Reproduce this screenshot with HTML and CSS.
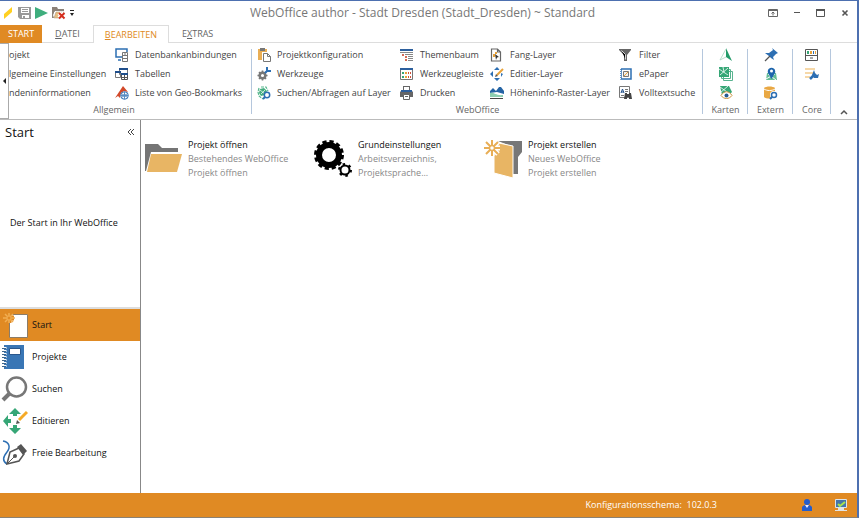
FILE: index.html
```html
<!DOCTYPE html>
<html lang="de">
<head>
  <meta charset="UTF-8">
  <meta name="viewport" content="width=device-width, initial-scale=1.0">
  <title>WebOffice author</title>
  <link rel="stylesheet" href="styles.css">
</head>
<body>
  <div class="window">
    <header class="titlebar">
      <div class="quick">
        <svg class="logo" width="12" height="14" viewBox="0 0 12 14"><path fill="#ffd021" d="M1 8 9 1v5L1 13z"/></svg>
        <button class="plain" aria-label="Speichern">
          <svg width="14" height="14" viewBox="0 0 14 14"><path fill="#999" d="M0 1h13v12H2l-2-2z"/><path fill="#fff" d="M3 2h8v5H3zM4 9h7v3H4z"/><path fill="#999" d="M4 3h6v1H4zM4 5h6v1H4zM5 10h2v2H5z"/></svg>
        </button>
        <button class="plain" aria-label="Starten">
          <svg width="14" height="14" viewBox="0 0 14 14"><path fill="#3fae7d" d="M0 1 13 7 0 13z"/></svg>
        </button>
        <button class="plain" aria-label="Projekt schließen">
          <svg width="14" height="14" viewBox="0 0 14 14"><path fill="#8c8178" d="M0 1h5l1 2h6v3H2v6H0z"/><path fill="#fff" d="M3 5h10v1H3L1 12V9z"/><path fill="#e9bd80" stroke="#a3947f" stroke-width=".5" d="M4 6h8l-2 6H2z"/><path stroke="#fff" stroke-width="4" d="m7 7 5 5m0-5-5 5"/><path stroke="#d42d1c" stroke-width="2" d="m7 7 5.500 5.500m0-5.500L7 12.500"/></svg>
        </button>
        <button class="plain" aria-label="Schnellzugriff anpassen">
          <svg width="7" height="8" viewBox="0 0 7 8"><path fill="#222" d="M1 1h4v1H1zM1 4h4L3 7z"/></svg>
        </button>
      </div>
      <h1>WebOffice author - Stadt Dresden (Stadt_Dresden) ~ Standard</h1>
      <div class="controls">
        <button class="plain" aria-label="Menüband anzeigen">
          <svg width="10" height="10" viewBox="0 0 10 10"><path fill="none" stroke="#666" d="M.5 1.500h9v7h-9zM.5 2.500h9M5 7.500V4.500M3.500 5.500 5 4l1.500 1.500"/></svg>
        </button>
        <button class="plain" aria-label="Minimieren">
          <svg width="10" height="10" viewBox="0 0 10 10"><path fill="#555" d="M2 4h6v1H2z"/></svg>
        </button>
        <button class="plain" aria-label="Maximieren">
          <svg width="10" height="10" viewBox="0 0 10 10"><path fill="none" stroke="#555" d="M.5 1.500h8v7h-8z"/><path fill="#555" d="M0 1h9v2H0z"/></svg>
        </button>
        <button class="plain" aria-label="Schließen">
          <svg width="10" height="10" viewBox="0 0 10 10"><path stroke="#555" stroke-width="1.600" d="m2.500 2.500 5 5m0-5-5 5"/></svg>
        </button>
      </div>
    </header>

    <nav class="tabs">
      <button class="tab start">START</button>
      <button class="tab"><u>D</u>ATEI</button>
      <button class="tab active"><u>B</u>EARBEITEN</button>
      <button class="tab">E<u>X</u>TRAS</button>
    </nav>

    <section class="ribbon">
      <button class="scroll" aria-label="Nach links blättern">
        <svg width="3" height="6" viewBox="0 0 3 6"><path fill="#222" d="M3 0v6L0 3z"/></svg>
      </button>

      <div class="group general">
        <div class="columns">
          <div class="col">
            <button class="cmd" aria-label="Projekt">ojekt</button>
            <button class="cmd" aria-label="Allgemeine Einstellungen">lgemeine Einstellungen</button>
            <button class="cmd" aria-label="Kundeninformationen">ndeninformationen</button>
          </div>
          <div class="col">
            <button class="cmd">
              <svg width="14" height="14" viewBox="0 0 14 14"><path fill="none" stroke="#2d6fb3" stroke-width="1.500" d="M7 9H1V1h11v3M3 12h3"/><path fill="#fff" stroke="#777" d="M7.500 4.500h5v9h-5zM7.500 7.500h5M7.500 10.500h5M9 6h2"/></svg>
              Datenbankanbindungen
            </button>
            <button class="cmd">
              <svg width="14" height="14" viewBox="0 0 14 14"><path fill="#fff" stroke="#777" d="M4.500 1.500h8v6h-8zM.5 4.500h5v6h-5z"/><path fill="#1f4f8c" d="M4 1h9v2H4zM0 4h6v2H0z"/><path fill="#fff" stroke="#555" d="M6.500 6.500h6v6h-6zM6.500 10.500h6M9.500 7v6"/><path fill="#1f4f8c" d="M6 6h7v2H6z"/></svg>
              Tabellen
            </button>
            <button class="cmd">
              <svg width="14" height="14" viewBox="0 0 14 14"><path fill="#d2492a" d="M8 0 13 6 9 5 6 7 5 12 3 10 0 12 4 6z"/><circle cx="9.500" cy="9.500" r="3.800" fill="#fff" stroke="#2d6fb3"/><path fill="none" stroke="#5b8dc2" d="M6 9.500h7M9.500 6v7M7 8c2 1 3 1 5 0M7 11c2-1 3-1 5 0"/></svg>
              Liste von Geo-Bookmarks
            </button>
          </div>
        </div>
        <h2>Allgemein</h2>
      </div>

      <div class="group weboffice">
        <div class="columns">
          <div class="col">
            <button class="cmd">
              <svg width="14" height="14" viewBox="0 0 14 14"><path fill="#e9ae55" d="M1 1h9v11H1z"/><path fill="#777" d="M3 0h5v3H3z"/><path fill="#fff" stroke="#fff" stroke-width="3" d="M6.500 5.500h4l3 3v5h-7z"/><path fill="#fff" stroke="#777" d="M6.500 5.500h4l3 3v5h-7zM10.500 5.500v3h3"/></svg>
              Projektkonfiguration
            </button>
            <button class="cmd">
              <svg width="14" height="14" viewBox="0 0 14 14"><circle cx="5.500" cy="8.500" r="2.800" fill="none" stroke="#777" stroke-width="2.500"/><path stroke="#777" stroke-width="1.600" d="M5.500 3.500v2m0 6v2m-5-5h2m6 0h2M2 5l1 1m5 5 1 1M2 12l1-1m5-5 1-1"/><path fill="none" stroke="#2d6fb3" stroke-width="2" d="m8 6 3-3m-1-3v3l1 1h3"/></svg>
              Werkzeuge
            </button>
            <button class="cmd">
              <svg width="14" height="14" viewBox="0 0 14 14"><path fill="none" stroke="#56b78e" stroke-width="1.200" stroke-dasharray="3 1" d="M4 1h5l2 4M2 2 1 6l1 4 4 3"/><path fill="#45ad80" d="m3 3 4-1 3 3-2 4-4 1-2-3z"/><path stroke="#fff" stroke-width=".7" d="m3 4 5 4M4 8l4-4"/><circle cx="10" cy="9" r="2.700" fill="#fff" stroke="#2d6fb3" stroke-width="1.500"/><path stroke="#2d6fb3" stroke-width="2" d="m8 11-2 2"/></svg>
              Suchen/Abfragen auf Layer
            </button>
          </div>
          <div class="col">
            <button class="cmd">
              <svg width="14" height="14" viewBox="0 0 14 14"><path fill="#2d5f9d" d="M0 1h13v2H0z"/><path stroke="#888" d="M0 4.500h13M5 6.500h8M8 8.500h5M8 10.500h5M8 12.500h5"/><path fill="#d66b56" d="M2 6h2v2H2zM5 8h2v2H5zM5 11h2v2H5z"/></svg>
              Themenbaum
            </button>
            <button class="cmd">
              <svg width="14" height="14" viewBox="0 0 14 14"><path fill="#fff" stroke="#777" d="M.5 1.500h12v11H.5z"/><path fill="#2d5f9d" d="M0 1h13v2H0z"/><path fill="#36a676" d="M2 5h2v2H2zM2 9h2v2H2z"/><path fill="#e9a33a" d="M5 5h2v2H5zM5 9h2v2H5z"/><path fill="#d4503a" d="M8 5h1v2H8zM8 9h1v2H8zM10 5h1v2h-1zM10 9h1v2h-1z"/></svg>
              Werkzeugleiste
            </button>
            <button class="cmd">
              <svg width="14" height="14" viewBox="0 0 14 14"><path fill="#666" d="M3 0h7v4H3zM1 5h11l1 1v5H0V6z"/><path fill="#fff" d="M4 1h5v3H4z"/><path fill="#2d5f9d" d="M1 4h11v2H1z"/><path fill="#fff" stroke="#666" d="M3.500 8.500h6v5h-6zM5 10.500h3"/></svg>
              Drucken
            </button>
          </div>
          <div class="col">
            <button class="cmd">
              <svg width="14" height="14" viewBox="0 0 14 14"><path fill="#fff" stroke="#666" stroke-width="1.200" d="M1.500 1h6l3 3v9h-9zM7.500 1v3h3"/><path fill="#e9a33a" d="M3 6h2v3H3zM5 4h2v2H5z"/><path fill="#333" d="m5 6 4 3-2 .5L6 12z"/></svg>
              Fang-Layer
            </button>
            <button class="cmd">
              <svg width="14" height="14" viewBox="0 0 14 14"><path fill="#2d6fb3" d="m7 0 3 3H4zM0 7l3-3v6zM7 14l-3-3h6zM13 7l-2 3V6z"/><path stroke="#fff" stroke-width="4" d="m6 8 7-6"/><path stroke="#e9a33a" stroke-width="2" d="m7 8 6-6"/><path fill="#555" d="m5 10 1-3 2 2z"/></svg>
              Editier-Layer
            </button>
            <button class="cmd">
              <svg width="14" height="14" viewBox="0 0 14 14"><path fill="#2564a5" d="m0 5 3-3 3 3 3-4h2l3 4v3L7 6 0 7z"/><path fill="#8dceb0" d="M0 7c4-1 6 3 13 2v2H0z"/><path fill="#444" d="M0 12h13v1H0z"/></svg>
              Höheninfo-Raster-Layer
            </button>
          </div>
          <div class="col">
            <button class="cmd">
              <svg width="14" height="14" viewBox="0 0 14 14"><path fill="#666" d="M0 1h12v1L8 7v6H5V7L0 2z"/><path stroke="#fff" stroke-width=".8" d="m2.500 2.500 4 4v5"/></svg>
              Filter
            </button>
            <button class="cmd">
              <svg width="14" height="14" viewBox="0 0 14 14"><path fill="#fff" stroke="#2d6fb3" stroke-width="1.500" d="M2 2h10v10H2z"/><path stroke="#fff" stroke-width="2" stroke-dasharray="1 1" d="M1 1v12"/><path fill="#eee" stroke="#777" d="M4.500 4.500h5v5h-5z"/><path stroke="#e9a33a" d="m5 9 4-4"/></svg>
              ePaper
            </button>
            <button class="cmd">
              <svg width="14" height="14" viewBox="0 0 14 14"><path fill="#fff" stroke="#777" d="M.5.5h10v11H.5zM6 3.500h3M6 5.500h3M2 9.500h3"/><path fill="none" stroke="#1f4f8c" d="M2 7 3.500 3 5 7M2.500 6h2"/><path fill="#444" d="M6 7h2v1h2V7h2l1 6h-3v-2H8v2H5z"/></svg>
              Volltextsuche
            </button>
          </div>
        </div>
        <h2>WebOffice</h2>
      </div>

      <div class="group small">
        <div class="col">
          <button class="cmd" aria-label="Karte">
            <svg width="14" height="14" viewBox="0 0 14 14"><path fill="#239b69" d="m7 0 6 13-6-4z"/><path fill="none" stroke="#a7d7c2" stroke-width=".8" d="M7 1 1 12l6-3"/></svg>
          </button>
          <button class="cmd" aria-label="Kartenstapel">
            <svg width="14" height="14" viewBox="0 0 14 14"><path fill="#fff" stroke="#58b38f" d="M4.500 4.500h9v9h-9zM2.500 2.500h9v9h-9z"/><path fill="#36a676" d="M0 0h10v10H0z"/><path stroke="#fff" stroke-width=".8" d="m0 2 9 6M1 8l8-7M4 0l1 5"/></svg>
          </button>
          <button class="cmd" aria-label="Kartenansicht">
            <svg width="14" height="14" viewBox="0 0 14 14"><path fill="#36a676" d="M1 0h9l3 6-3 3H3z"/><path stroke="#fff" stroke-width=".8" d="m1 1 10 7M1 7l8-7"/><path fill="#fff" stroke="#cb943f" d="M2 9.500c3-5 8-5 11 0-3 4-8 4-11 0z"/><circle cx="7.500" cy="9.500" r="2" fill="#275b91"/></svg>
          </button>
        </div>
        <h2>Karten</h2>
      </div>

      <div class="group small">
        <div class="col">
          <button class="cmd" aria-label="Anheften">
            <svg width="14" height="14" viewBox="0 0 14 14"><path fill="#2d6fb3" d="m8 0 6 5-2 1-3 3 1 3-3-2-2-2-4-3h4l4-3z"/><path stroke="#555" stroke-width="1.200" d="m6 8-5 5"/></svg>
          </button>
          <button class="cmd" aria-label="Standort">
            <svg width="14" height="14" viewBox="0 0 14 14"><path fill="#65bd96" d="M3 6h9l1 7H2z"/><path stroke="#fff" d="m2 12 9-5M4 7l8 6"/><path fill="#1e65ac" d="M7.500 12 4 6c-2-7 9-7 7 0z"/><circle cx="7.500" cy="4" r="1.500" fill="#fff"/></svg>
          </button>
          <button class="cmd" aria-label="Datenquelle suchen">
            <svg width="14" height="14" viewBox="0 0 14 14"><path fill="#e9a844" d="M0 2c2-2 9-2 11 0v9c-2 2-9 2-11 0z"/><path fill="none" stroke="#fff" d="M0 3c3 2 8 2 11 0"/><circle cx="10" cy="9" r="4" fill="#fff"/><circle cx="10" cy="9" r="2.500" fill="#fff" stroke="#2d6fb3" stroke-width="1.500"/><path stroke="#2d6fb3" stroke-width="2" d="m8 11-2 2"/></svg>
          </button>
        </div>
        <h2>Extern</h2>
      </div>

      <div class="group small core">
        <div class="col">
          <button class="cmd" aria-label="Bibliothek">
            <svg width="14" height="14" viewBox="0 0 14 14"><path fill="#fff" stroke="#555" d="M.5 1.500h12v11H.5zM.5 7.500h12M5 10h3"/><path fill="#36a676" d="M2 3h2v3H2z"/><path fill="#e9a33a" d="M5 3h2v3H5zM10 3h1v3h-1z"/><path fill="#2d6fb3" d="M8 3h1v3H8z"/></svg>
          </button>
          <button class="cmd" aria-label="Werkzeugliste">
            <svg width="14" height="14" viewBox="0 0 14 14"><path fill="#f6d8a8" d="M0 1h10v2H0zM0 5h9v2H0zM0 9h5v2H0z"/><path stroke="#2d6fb3" stroke-width="2.500" d="m5 12 4-4"/><path fill="#2d6fb3" d="m9 3 1 3 2 2 2-1-1 4H9L7 8z"/></svg>
          </button>
        </div>
        <h2>Core</h2>
      </div>

      <button class="plain collapse" aria-label="Menüband reduzieren">
        <svg width="8" height="6" viewBox="0 0 8 6"><path fill="none" stroke="#555" stroke-width="1.500" d="m1 5 3-3 3 3"/></svg>
      </button>
    </section>

    <div class="workspace">
      <aside class="sidebar">
        <div class="side-head">
          <h2>Start</h2>
          <button class="plain" aria-label="Leiste einklappen">
            <svg width="8" height="8" viewBox="0 0 8 8"><path fill="none" stroke="#444" d="M4 1 1 4l3 3M7 1 4 4l3 3"/></svg>
          </button>
        </div>
        <p class="intro">Der Start in Ihr WebOffice</p>
        <nav class="side-nav">
          <button class="nav-item active">
            <svg width="28" height="28" viewBox="0 0 28 28"><path fill="#fff" stroke="#8b7c68" d="M9.500 3.500h18v23h-18z"/><path stroke="#e08a23" stroke-width="5" d="M9 2v10M4 7h10"/><path stroke="#f1ae52" stroke-width="1.500" d="M9 2v10M3 7h12M5 3l8 8m0-8-8 8"/><circle cx="9" cy="7" r="2" fill="#e08a23" stroke="#f1ae52"/></svg>
            Start
          </button>
          <button class="nav-item">
            <svg width="28" height="28" viewBox="0 0 28 28"><path fill="#3976b5" d="M4 2h20v24H4z"/><path fill="#fff" stroke="#2a578c" d="M9.500 5.500h11v6h-11z"/><path stroke="#fff" stroke-width="3" stroke-dasharray="2 1" d="M5 4v20"/><path stroke="#3f6589" stroke-width="4" stroke-dasharray="1 2" d="M4 5v19"/></svg>
            Projekte
          </button>
          <button class="nav-item">
            <svg width="28" height="28" viewBox="0 0 28 28"><circle cx="16.500" cy="12" r="9.500" fill="none" stroke="#777" stroke-width="2.500"/><path stroke="#777" stroke-width="4" d="m9 19-6 6"/></svg>
            Suchen
          </button>
          <button class="nav-item">
            <svg width="28" height="28" viewBox="0 0 28 28"><path fill="#36a676" d="m15 1 6 6h-4v2h-4V7H9zM3 14l5-6v4h3v4H8v4zM15 27l-6-6h4v-3h4v3h4z"/><path stroke="#fff" stroke-width="5" d="m17 15 10-10"/><path stroke="#f5aa27" stroke-width="3" d="m19 13 8-8"/><path fill="#555" d="m16 17 1-4 3 3z"/></svg>
            Editieren
          </button>
          <button class="nav-item">
            <svg width="28" height="28" viewBox="0 0 28 28"><path fill="none" stroke="#2d6fb3" stroke-width="1.500" d="M3 2c6 1 8 6 4 11s-5 9 0 12"/><path fill="#fff" stroke="#555" stroke-width="1.500" d="m7 25 3-12 9-4 5 6-5 7z"/><path fill="#555" d="m17 8 4-3 6 7-4 4z"/><circle cx="15" cy="17" r="2" fill="#555"/><path stroke="#555" d="m7 25 8-8"/></svg>
            Freie Bearbeitung
          </button>
        </nav>
      </aside>

      <main class="tiles">
        <button class="tile">
          <svg width="40" height="40" viewBox="0 0 40 40"><path fill="#757575" d="M3 5h13l4 4h16v4H9L4 32H3z"/><path fill="#e8b564" d="M9 15h31l-5 18H5z"/></svg>
          <span><strong>Projekt öffnen</strong>Bestehendes WebOffice<br>Projekt öffnen</span>
        </button>
        <button class="tile">
          <svg width="40" height="40" viewBox="0 0 40 40"><circle cx="17" cy="16" r="10" fill="none" stroke="#000" stroke-width="6"/><circle cx="17" cy="16" r="13.500" fill="none" stroke="#000" stroke-width="3" stroke-dasharray="4.200 2.870"/><circle cx="33" cy="31" r="4.500" fill="#fff" stroke="#000" stroke-width="2"/><circle cx="33" cy="31" r="6" fill="none" stroke="#000" stroke-width="2" stroke-dasharray="2.500 3.780"/></svg>
          <span><strong>Grundeinstellungen</strong>Arbeitsverzeichnis,<br>Projektsprache...</span>
        </button>
        <button class="tile">
          <svg width="40" height="40" viewBox="0 0 40 40"><path fill="#777" d="M16 2h24v11l-4 5v17h-5V8z"/><path fill="#e8b564" stroke="#fff" d="m12 3 19 4v32l-19-5z"/><path stroke="#fff" stroke-width="5" d="M10 1v16M2 9h16M4 3l12 12M16 3 4 15"/><path stroke="#e8ae56" stroke-width="2" d="M10 1v16M2 9h16M4 3l12 12M16 3 4 15"/><circle cx="10" cy="9" r="2.500" fill="#fff" stroke="#e8ae56" stroke-width="1.500"/></svg>
          <span><strong>Projekt erstellen</strong>Neues WebOffice<br>Projekt erstellen</span>
        </button>
      </main>
    </div>

    <footer class="status">
      <span>Konfigurationsschema:&nbsp; 102.0.3</span>
      <svg width="12" height="14" viewBox="0 0 12 14"><path fill="#245dcc" d="M1 9c2-3 8-3 10 0v4H1z"/><circle cx="6" cy="4" r="3" fill="#245dcc"/><path fill="#eef" d="m4 7 2 3 2-3z"/></svg>
      <svg width="14" height="14" viewBox="0 0 14 14"><path fill="#4675a9" stroke="#dce5eb" d="M1.500 1.500h11v8h-11z"/><path fill="#e1e4e5" d="M4 10h6v2h3v1H1v-1h3z"/><path fill="none" stroke="#a9e34d" stroke-width="2" d="m4 6 2 2 5-4"/></svg>
    </footer>
  </div>
</body>
</html>
```
FILE: styles.css
```css
* {
  box-sizing: border-box;
}
body {
  margin: 0;
  font-family: "Open Sans", "Noto Sans", sans-serif;
  font-size: 9px;
  line-height: 14px;
  color: #222;
  background: #fff;
}
h1, h2, p {
  margin: 0;
  font-weight: normal;
}
button {
  font: inherit;
  color: inherit;
  background: none;
  border: none;
  padding: 0;
  text-align: left;
  white-space: nowrap;
  cursor: pointer;
}
svg {
  display: block;
  flex: none;
}
.window {
  display: flex;
  flex-direction: column;
  min-height: 100vh;
  border: 1px solid #4d70b0;
  border-width: 1px 2px 1px 0;
  border-bottom-color: #8b8173;
}

/* title bar */
.titlebar {
  display: grid;
  grid-template-columns: 1fr auto 1fr;
  align-items: center;
  height: 24px;
}
.quick {
  display: flex;
  align-items: center;
  gap: 3px;
  padding-left: 3px;
}
.titlebar h1 {
  font-size: 12px;
  color: #777;
  white-space: nowrap;
  padding-right: 12px;
}
.controls {
  display: flex;
  justify-content: flex-end;
  gap: 14px;
  padding-right: 7px;
}

/* tabs */
.tabs {
  display: flex;
  height: 18px;
}
.tab {
  padding: 0 13px;
  color: #666;
  border-bottom: 1px solid #ddd;
}
.tabs::after {
  content: "";
  flex: 1;
  border-bottom: 1px solid #ddd;
}
.tab.start {
  padding: 0 8px;
  color: #fff;
  background: #e08a23;
  border-color: #e08a23;
}
.tab.active {
  padding: 0 11px;
  color: #e08a23;
  border: 1px solid #ddd;
  border-bottom: none;
}

/* ribbon */
.ribbon {
  position: relative;
  display: flex;
  height: 77px;
  padding-top: 2px;
  overflow: hidden;
  color: #444;
  border-bottom: 1px solid #bbb;
}
.scroll {
  position: absolute;
  left: 0;
  top: 0;
  bottom: 0;
  width: 9px;
  padding-left: 3px;
  background: #fff;
  border: 1px solid #aaa;
  border-left: none;
}
.group {
  position: relative;
  flex: none;
  display: flex;
  flex-direction: column;
  justify-content: space-between;
}
.group::after {
  content: "";
  position: absolute;
  right: 0;
  top: 4px;
  bottom: 5px;
  border-right: 1px solid #b5c7dd;
}
.group h2 {
  font-size: 9px;
  color: #666;
  text-align: center;
  padding-bottom: 2px;
}
.columns {
  display: grid;
}
.general {
  width: 252px;
}
.general .columns {
  grid-template-columns: 106px auto;
  padding-left: 9px;
}
.general h2 {
  padding-right: 24px;
}
.weboffice {
  width: 451px;
}
.weboffice .columns {
  grid-template-columns: 143px 90px 129px auto;
  padding-left: 5px;
}
.small {
  width: 45px;
}
.small.core {
  width: 38px;
}
.cmd {
  display: flex;
  align-items: center;
  gap: 6px;
  height: 19px;
}
.small .cmd {
  margin: 0 auto;
}
.collapse {
  align-self: flex-end;
  margin-left: auto;
  padding: 4px 9px;
}

/* work area */
.workspace {
  flex: 1;
  display: flex;
}
.sidebar {
  flex: none;
  display: flex;
  flex-direction: column;
  width: 141px;
  padding-bottom: 24px;
  border-right: 1px solid #888;
  color: #111;
}
.side-head {
  display: flex;
  justify-content: space-between;
  align-items: center;
  height: 24px;
  padding: 0 5px;
}
.side-head h2 {
  font-size: 13px;
}
.intro {
  flex: 1;
  display: flex;
  align-items: center;
  padding: 0 10px 6px;
}
.side-nav {
  border-top: 2px solid #ddd;
}
.nav-item {
  display: flex;
  align-items: center;
  gap: 4px;
  width: 100%;
  height: 32px;
}
.nav-item.active {
  background: #e08a23;
}
.tiles {
  flex: 1;
  display: flex;
  flex-wrap: wrap;
  align-content: flex-start;
  padding: 18px 1px;
}
.tile {
  display: flex;
  align-items: center;
  gap: 6px;
  width: 170px;
  color: #888;
}
.tile strong {
  display: block;
  font-weight: normal;
  color: #111;
}

/* status bar */
.status {
  display: flex;
  justify-content: flex-end;
  align-items: center;
  height: 24px;
  padding-right: 9px;
  color: #fff;
  background: #e08a23;
}
.status span {
  margin-right: 84px;
}
.status svg + svg {
  margin-left: 21px;
}
```
